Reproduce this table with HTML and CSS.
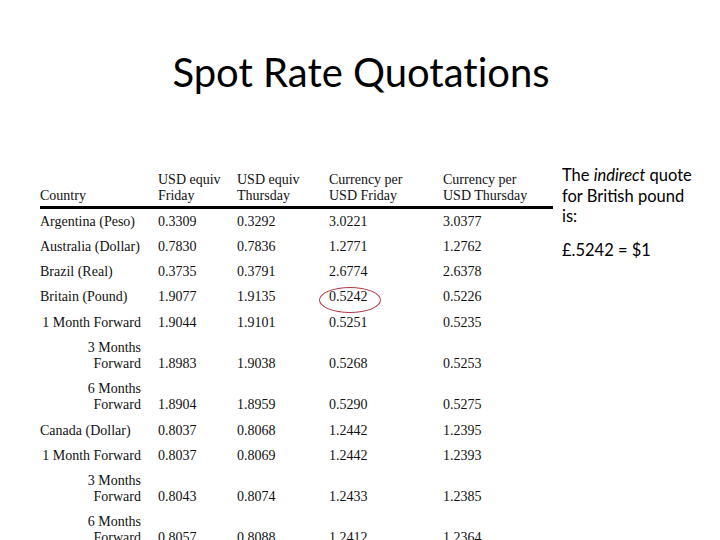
FILE: index.html
```html
<!DOCTYPE html>
<html>
<head>
<meta charset="utf-8">
<link rel="stylesheet" href="styles.css">
</head>
<body>
<h1 class="title">Spot Rate Quotations</h1>
<div class="content">
  <table class="rates">
    <colgroup>
      <col class="c1"><col class="c2"><col class="c3"><col class="c4"><col class="c5">
    </colgroup>
    <thead>
      <tr>
        <th>Country</th>
        <th>USD equiv<br>Friday</th>
        <th>USD equiv<br>Thursday</th>
        <th>Currency per<br>USD Friday</th>
        <th>Currency per<br>USD Thursday</th>
      </tr>
    </thead>
    <tbody>
      <tr><td>Argentina (Peso)</td><td>0.3309</td><td>0.3292</td><td>3.0221</td><td>3.0377</td></tr>
      <tr><td>Australia (Dollar)</td><td>0.7830</td><td>0.7836</td><td>1.2771</td><td>1.2762</td></tr>
      <tr><td>Brazil (Real)</td><td>0.3735</td><td>0.3791</td><td>2.6774</td><td>2.6378</td></tr>
      <tr><td>Britain (Pound)</td><td>1.9077</td><td>1.9135</td><td class="circled">0.5242</td><td>0.5226</td></tr>
      <tr><td class="fwd">1 Month Forward</td><td>1.9044</td><td>1.9101</td><td>0.5251</td><td>0.5235</td></tr>
      <tr><td class="fwd">3 Months<br>Forward</td><td>1.8983</td><td>1.9038</td><td>0.5268</td><td>0.5253</td></tr>
      <tr><td class="fwd">6 Months<br>Forward</td><td>1.8904</td><td>1.8959</td><td>0.5290</td><td>0.5275</td></tr>
      <tr><td>Canada (Dollar)</td><td>0.8037</td><td>0.8068</td><td>1.2442</td><td>1.2395</td></tr>
      <tr><td class="fwd">1 Month Forward</td><td>0.8037</td><td>0.8069</td><td>1.2442</td><td>1.2393</td></tr>
      <tr><td class="fwd">3 Months<br>Forward</td><td>0.8043</td><td>0.8074</td><td>1.2433</td><td>1.2385</td></tr>
      <tr><td class="fwd">6 Months<br>Forward</td><td>0.8057</td><td>0.8088</td><td>1.2412</td><td>1.2364</td></tr>
    </tbody>
  </table>
  <div class="note">
    <p>The <em>indirect</em> quote for British pound is:</p>
    <p class="eq">£.5242 = $1</p>
  </div>
</div>
</body>
</html>
```
FILE: styles.css
```css
html, body {
  margin: 0;
  padding: 0;
  background: #ffffff;
  width: 720px;
  height: 540px;
  overflow: hidden;
}
.title {
  margin: 0;
  padding-top: 52px;
  height: 123px;
  box-sizing: border-box;
  text-align: center;
  font-family: "Lato", "Open Sans", sans-serif;
  font-weight: 400;
  font-size: 40px;
  line-height: 40px;
  font-variant-ligatures: none;
  color: #000;
  padding-left: 2px;
}
.content {
  display: flex;
  align-items: flex-start;
  padding-left: 40px;
}
.rates {
  margin-top: 49px;
  border-collapse: collapse;
  table-layout: fixed;
  width: 513px;
  font-family: "Liberation Serif", "Times New Roman", serif;
  font-size: 14px;
  color: #111;
}
.c1 { width: 118px; }
.c2 { width: 79px; }
.c3 { width: 92px; }
.c4 { width: 114px; }
.c5 { width: 110px; }
.rates th {
  font-weight: normal;
  text-align: left;
  vertical-align: bottom;
  line-height: 16px;
  padding: 0 0 2px 0;
  border-bottom: 3px solid #000;
  white-space: nowrap;
}
.rates td {
  text-align: left;
  vertical-align: bottom;
  line-height: 16px;
  padding: 4.65px 0;
  white-space: nowrap;
}
.rates td.fwd {
  text-align: right;
  padding-right: 17px;
}
.circled {
  position: relative;
}
.circled::after {
  content: "";
  position: absolute;
  left: -10px;
  top: 2px;
  width: 62px;
  height: 26px;
  box-sizing: border-box;
  border: 1px solid #b23a44;
  border-radius: 50%;
}
.note {
  margin-left: 9px;
  margin-top: 42px;
  width: 134px;
  font-family: "Lato", "Open Sans", sans-serif;
  font-size: 16.5px;
  line-height: 20.5px;
  color: #000;
}
.note p {
  margin: 0;
}
.note .eq {
  margin-top: 13px;
}
```
